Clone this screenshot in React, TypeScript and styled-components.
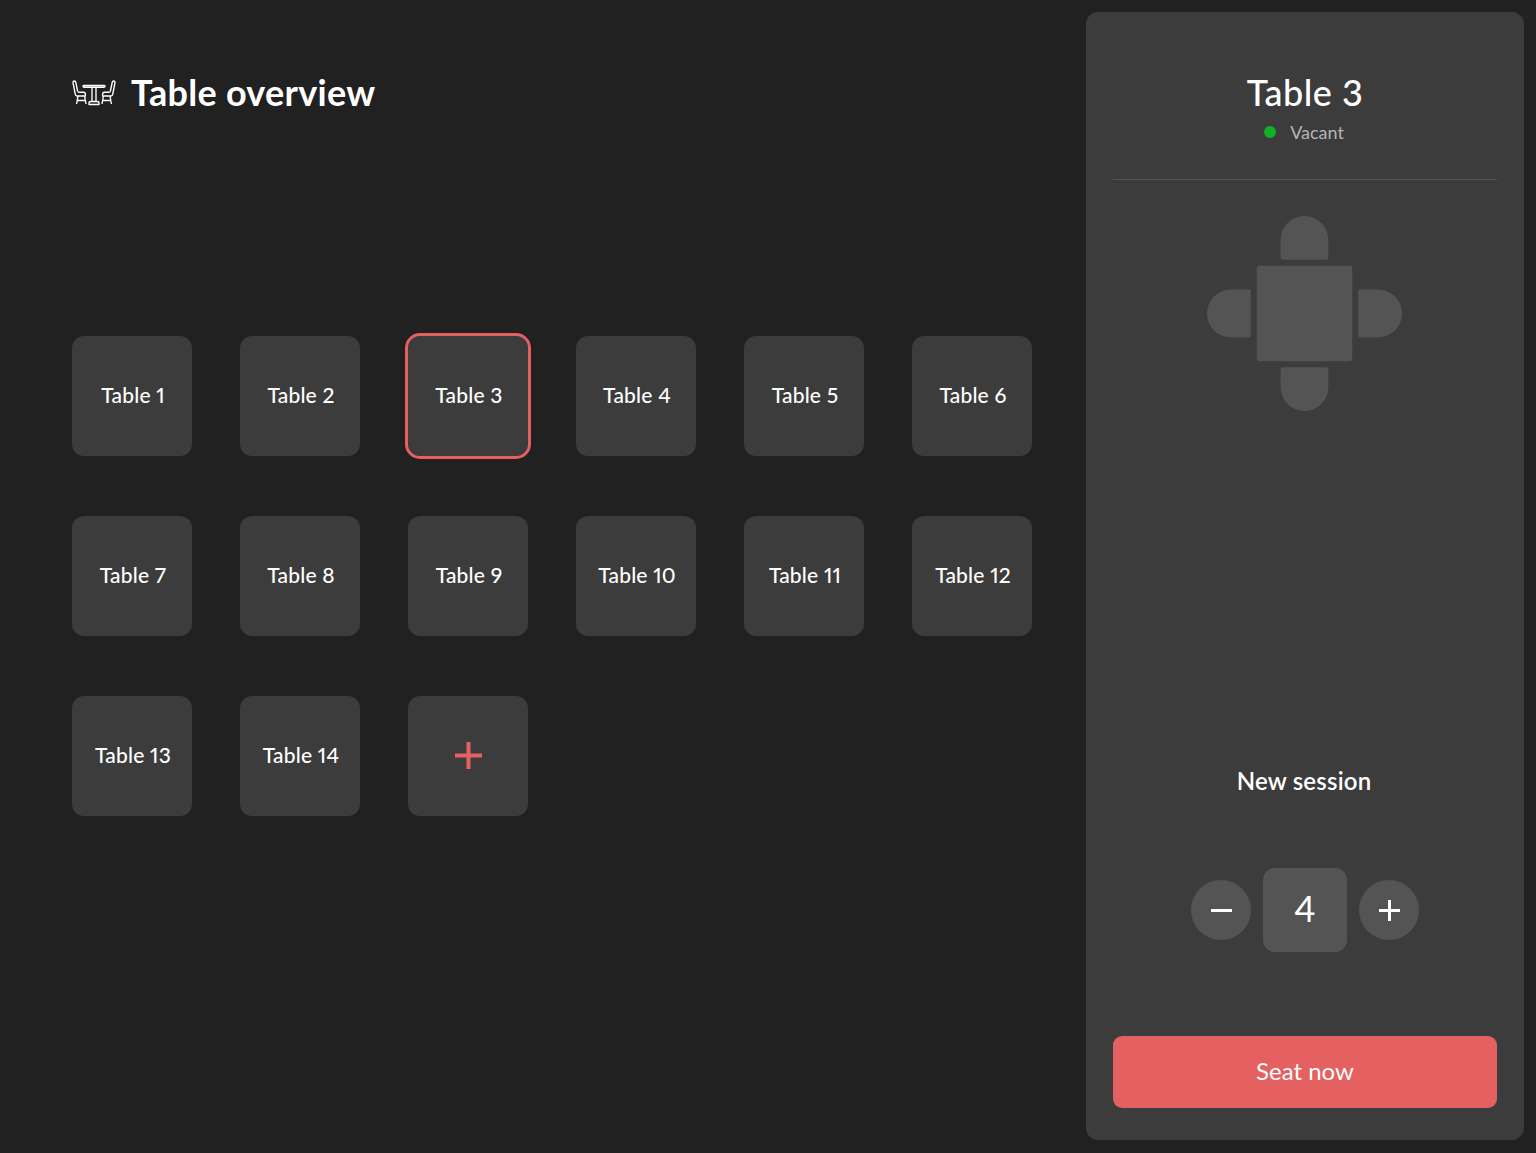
import React from "react";
import styled, { createGlobalStyle } from "styled-components";

const GlobalStyle = createGlobalStyle`
	html, body {
		margin: 0;
		background-color: #212121;
		font-family: "Lato", "Open Sans", sans-serif;
		color: #fff;
	}
	* {
		box-sizing: border-box;
	}
`;

const Page = styled.div`
	display: flex;
	height: 1153px;
	padding: 12px 12px 13px 72px;
	overflow: hidden;
`;
const Main = styled.main`
	flex: 1;
	display: flex;
	flex-direction: column;
	padding-top: 60px;
`;
const Header = styled.header`
	display: flex;
	align-items: center;
	gap: 15px;
	height: 42px;
`;
const Title = styled.h1`
	margin: 0;
	padding-bottom: 2px;
	font-size: 36px;
	font-weight: 700;
	letter-spacing: 0.28px;
	line-height: 42px;
`;
const Grid = styled.div`
	display: grid;
	grid-template-columns: repeat(6, 120px);
	grid-auto-rows: 120px;
	gap: 60px 48px;
	margin-top: 222px;
`;
const Tile = styled.button<{ $selected?: boolean }>`
	display: flex;
	align-items: center;
	justify-content: center;
	width: 120px;
	height: 120px;
	padding: 0;
	border: 0;
	border-radius: 12px;
	background-color: #3c3c3c;
	color: #fff;
	font-family: inherit;
	font-size: 21px;
	font-weight: 500;
	font-variant-numeric: proportional-nums;
	letter-spacing: 0.2px;
	outline: ${({ $selected }) => ($selected ? "3px solid #e56060" : "none")};
`;
const TileLabel = styled.span`
	padding: 0 0 4px 2px;
`;
const AddIcon = styled.svg`
	margin: 0 0 1px 1px;
`;
const Panel = styled.aside`
	display: flex;
	flex-direction: column;
	align-items: center;
	width: 438px;
	padding: 0 27px 32px;
	border-radius: 12px;
	background-color: #3c3c3c;
`;
const PanelHead = styled.div`
	display: flex;
	flex-direction: column;
	align-items: center;
	align-self: stretch;
	height: 168px;
	padding-top: 59px;
	border-bottom: 1px solid #545454;
`;
const PanelTitle = styled.h2`
	margin: 0;
	font-size: 36px;
	font-weight: 500;
	letter-spacing: 0.5px;
	line-height: 42px;
`;
const Status = styled.div`
	display: flex;
	align-items: center;
	gap: 14px;
	margin-top: 7px;
	padding-right: 2px;
	font-size: 18px;
	line-height: 24px;
	color: #b4b4b4;
`;
const Dot = styled.span`
	width: 12px;
	height: 12px;
	border-radius: 50%;
	background-color: #10b128;
`;
const Seats = styled.svg`
	display: block;
	margin: 36px 1px 0 0;
`;
const SessionLabel = styled.div`
	margin-top: 355px;
	padding-right: 2px;
	font-size: 24px;
	font-weight: 600;
	letter-spacing: 0.2px;
	line-height: 30px;
`;
const Stepper = styled.div`
	display: flex;
	align-items: center;
	gap: 12px;
	margin-top: 72px;
`;
const RoundButton = styled.button`
	display: flex;
	align-items: center;
	justify-content: center;
	width: 60px;
	height: 60px;
	padding: 0;
	border: 0;
	border-radius: 50%;
	background-color: #545454;
`;
const Count = styled.div`
	display: flex;
	align-items: center;
	justify-content: center;
	width: 84px;
	height: 84px;
	padding-bottom: 5px;
	border-radius: 12px;
	background-color: #545454;
	font-size: 36px;
	font-weight: 400;
`;
const SeatButton = styled.button`
	align-self: stretch;
	height: 72px;
	margin-top: auto;
	padding: 0 0 4px;
	border: 0;
	border-radius: 9px;
	background-color: #e56060;
	color: #fff;
	font-family: inherit;
	font-size: 24px;
	font-weight: 400;
`;

const tables = Array.from({ length: 14 }, (_, i) => i + 1);

function DiningIcon() {
	return (
		<svg width="44" height="26" viewBox="0 0 44 26" fill="none" stroke="#fff" strokeWidth="1.35" strokeLinejoin="round">
			{/* left chair */}
			<path d="M1 2.5 Q1 1 2.2 1 Q3.6 1 3.8 2.5 L5.6 11 Q5.8 12.2 7 12.2 H11.5 Q13.4 12.2 13.4 14.2 V16 H5 Q3.5 16 3.2 14 Z" />
			<path d="M6 16 L4.6 24 M12.6 16 L14 24 M5.4 20.5 H13.4" />
			{/* right chair */}
			<path d="M43 2.5 Q43 1 41.8 1 Q40.4 1 40.2 2.5 L38.4 11 Q38.2 12.2 37 12.2 H32.5 Q30.6 12.2 30.6 14.2 V16 H39 Q40.5 16 40.8 14 Z" />
			<path d="M38 16 L39.4 24 M31.4 16 L30 24 M38.6 20.5 H30.6" />
			{/* table */}
			<path d="M12 5.5 H32 Q33 5.5 33 6.3 Q33 7.2 32 7.2 H12 Q11 7.2 11 6.3 Q11 5.5 12 5.5 Z" />
			<path d="M20 7.2 V21.5 M24 7.2 V21.5" />
			<path d="M17 24.5 V23 Q17 21.5 19 21.5 H25 Q27 21.5 27 23 V24.5 Z" />
		</svg>
	);
}

function SeatsDiagram() {
	return (
		<Seats width="195" height="195" viewBox="0 0 196 196" fill="#545454">
			<rect x="50" y="50" width="96" height="96" rx="2.5" />
			<path d="M74 24 a24 24 0 0 1 48 0 V42 a2 2 0 0 1 -2 2 H76 a2 2 0 0 1 -2 -2 Z" />
			<path d="M74 172 a24 24 0 0 0 48 0 V154 a2 2 0 0 0 -2 -2 H76 a2 2 0 0 0 -2 2 Z" />
			<path d="M24 74 a24 24 0 0 0 0 48 H42 a2 2 0 0 0 2 -2 V76 a2 2 0 0 0 -2 -2 Z" />
			<path d="M172 74 a24 24 0 0 1 0 48 H154 a2 2 0 0 1 -2 -2 V76 a2 2 0 0 1 2 -2 Z" />
		</Seats>
	);
}

function App() {
	return (
		<>
			<GlobalStyle />
			<Page>
				<Main>
					<Header>
						<DiningIcon />
						<Title>Table overview</Title>
					</Header>
					<Grid>
						{tables.map((n) => (
							<Tile key={n} $selected={n === 3}>
								<TileLabel>Table {n}</TileLabel>
							</Tile>
						))}
						<Tile>
							<AddIcon width="27" height="27" viewBox="0 0 20 20" fill="none" stroke="#e56060" strokeWidth="3">
								<path d="M10 0 V20 M0 10 H20" />
							</AddIcon>
						</Tile>
					</Grid>
				</Main>
				<Panel>
					<PanelHead>
						<PanelTitle>Table 3</PanelTitle>
						<Status>
							<Dot />
							Vacant
						</Status>
					</PanelHead>
					<SeatsDiagram />
					<SessionLabel>New session</SessionLabel>
					<Stepper>
						<RoundButton>
							<svg width="21" height="21" viewBox="0 0 21 21" stroke="#fff" strokeWidth="3">
								<path d="M0 10.5 H21" />
							</svg>
						</RoundButton>
						<Count>4</Count>
						<RoundButton>
							<svg width="21" height="21" viewBox="0 0 21 21" stroke="#fff" strokeWidth="3">
								<path d="M10.5 0 V21 M0 10.5 H21" />
							</svg>
						</RoundButton>
					</Stepper>
					<SeatButton>Seat now</SeatButton>
				</Panel>
			</Page>
		</>
	);
}

export default App;
